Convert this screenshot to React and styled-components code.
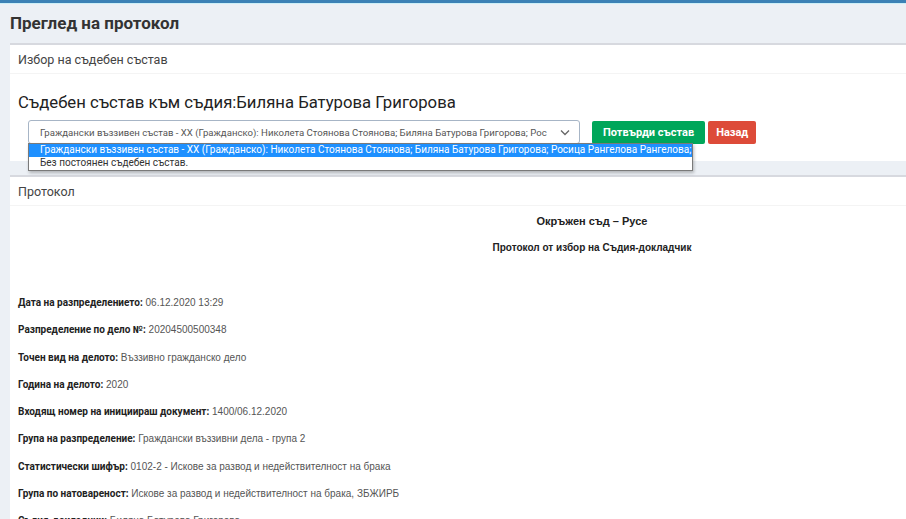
import React from "react";
import styled, { createGlobalStyle } from "styled-components";

const Global = createGlobalStyle`
  html, body { margin: 0; padding: 0; }
  body {
    background: #ecf0f5;
    font-family: Roboto, "Noto Sans", sans-serif;
    color: #333;
    overflow: hidden;
  }
`;

const TopBar = styled.div`
  height: 3px;
  background: #3c81b5;
  border-bottom: 1px solid #cdeff7;
`;

const PageTitle = styled.h1`
  margin: 0;
  padding: 5px 10px 6px;
  font-family: Roboto, "Noto Sans", sans-serif;
  font-weight: 700;
  font-size: 17px;
  line-height: 28px;
  color: #333;
`;

const Card = styled.section`
  position: relative;
  z-index: ${(p) => p.$z || 1};
  margin: 0 0 ${(p) => p.$mb || 0}px 10px;
  background: #fff;
  border-top: 2px solid #d7d9df;
`;

const CardHeader = styled.div`
  height: 28px;
  padding: 0 8px;
  display: flex;
  align-items: center;
  border-bottom: 1px solid #f4f4f4;
  font-family: Roboto, sans-serif;
  font-size: 12.5px;
  color: #444;
`;

const CardBody = styled.div`
  padding: ${(p) => p.$pad || "17px 8px"};
`;

const BigTitle = styled.h3`
  margin: 0 0 5px;
  font-family: Roboto, sans-serif;
  font-weight: 400;
  font-size: 16.7px;
  line-height: 24px;
  color: #222;
`;

const FormRow = styled.div`
  position: relative;
  display: flex;
  align-items: center;
  padding-left: 10px;
  height: 24px;
`;

const SelectBox = styled.div`
  width: 552px;
  height: 24px;
  flex-shrink: 0;
  box-sizing: border-box;
  border: 1px solid #a7b5c6;
  border-radius: 3px;
  display: flex;
  align-items: center;
  justify-content: space-between;
  gap: 8px;
  padding: 0 9px 0 11px;
  margin-right: 12px;
  font-size: 9.6px;
  color: #555;
  white-space: nowrap;
`;

const SelectText = styled.span`
  overflow: hidden;
`;

const Button = styled.button`
  height: 23px;
  border: none;
  border-radius: 2px;
  padding: 0 ${(p) => p.$px || 10}px;
  margin-right: 3px;
  background: ${(p) => p.$bg};
  color: #fff;
  font-family: Roboto, sans-serif;
  font-weight: 700;
  font-size: 11px;
`;

const Dropdown = styled.ul`
  position: absolute;
  left: 10px;
  top: 23px;
  width: 663px;
  margin: 0;
  padding: 0 0 1px;
  list-style: none;
  background: #fff;
  border: 1px solid #7a7a7a;
  box-shadow: 1px 2px 3px rgba(0, 0, 0, 0.25);
  z-index: 5;
  font-size: 10px;
`;

const Option = styled.li`
  height: 12.5px;
  line-height: 12.5px;
  padding-left: 11px;
  white-space: nowrap;
  background: ${(p) => (p.$sel ? "#1e90ff" : "transparent")};
  color: ${(p) => (p.$sel ? "#fff" : "#333")};
`;

const Center = styled.div`
  padding-left: 268px;
  text-align: center;
  font-family: "Liberation Sans", Arial, sans-serif;
  font-weight: 700;
  font-size: ${(p) => p.$fs}px;
  line-height: 16px;
  color: #222;
  margin-bottom: ${(p) => p.$mb}px;
`;

const Line = styled.p`
  margin: ${(p) => p.$mt || 0}px 0 11.3px;
  height: 16px;
  line-height: 16px;
  font-family: "Liberation Sans", Arial, sans-serif;
  font-size: 10px;
  color: #555;
  white-space: nowrap;
`;

const Label = styled.b`
  font-family: Roboto, sans-serif;
  font-weight: 700;
  font-size: 10px;
  color: #222;
`;

const Chevron = () => (
  <svg width="10" height="7" viewBox="0 0 10 7" style={{ flexShrink: 0 }}>
    <path d="M1 1.5 L5 5.5 L9 1.5" fill="none" stroke="#666" strokeWidth="1.3" />
  </svg>
);

const full =
  "Граждански въззивен състав - ХХ (Гражданско): Николета Стоянова Стоянова; Биляна Батурова Григорова; Росица Рангелова Рангелова;";
const shown =
  "Граждански въззивен състав - ХХ (Гражданско): Николета Стоянова Стоянова; Биляна Батурова Григорова; Рос";

const rows = [
  ["Дата на разпределението:", "06.12.2020 13:29"],
  ["Разпределение по дело №:", "20204500500348"],
  ["Точен вид на делото:", "Въззивно гражданско дело"],
  ["Година на делото:", "2020"],
  ["Входящ номер на инициираш документ:", "1400/06.12.2020"],
  ["Група на разпределение:", "Граждански въззивни дела - група 2"],
  ["Статистически шифър:", "0102-2 - Искове за развод и недействителност на брака"],
  ["Група по натовареност:", "Искове за развод и недействителност на брака, ЗБЖИРБ"],
  ["Съдия-докладчик:", "Биляна Батурова Григорова"],
];

export default function App() {
  return (
    <>
      <Global />
      <TopBar />
      <PageTitle>Преглед на протокол</PageTitle>
      <Card $mb={14} $z={2}>
        <CardHeader>Избор на съдебен състав</CardHeader>
        <CardBody>
          <BigTitle>Съдебен състав към съдия:Биляна Батурова Григорова</BigTitle>
          <FormRow lang="bg">
            <SelectBox>
              <SelectText>{shown}</SelectText>
              <Chevron />
            </SelectBox>
            <Button $bg="#00a65a" $px={11}>Потвърди състав</Button>
            <Button $bg="#dd4b39" $px={8}>Назад</Button>
            <Dropdown>
              <Option $sel>{full}</Option>
              <Option>Без постоянен съдебен състав.</Option>
            </Dropdown>
          </FormRow>
        </CardBody>
      </Card>
      <Card>
        <CardHeader>Протокол</CardHeader>
        <CardBody $pad="7px 8px">
          <Center $fs={11} $mb={11}>Окръжен съд – Русе</Center>
          <Center $fs={10} $mb={39}>Протокол от избор на Съдия-докладчик</Center>
          {rows.map(([l, v], i) => (
            <Line key={l} $mt={i === rows.length - 1 ? 3 : 0}>
              <Label lang="bg">{l}</Label> {v}
            </Line>
          ))}
        </CardBody>
      </Card>
    </>
  );
}
